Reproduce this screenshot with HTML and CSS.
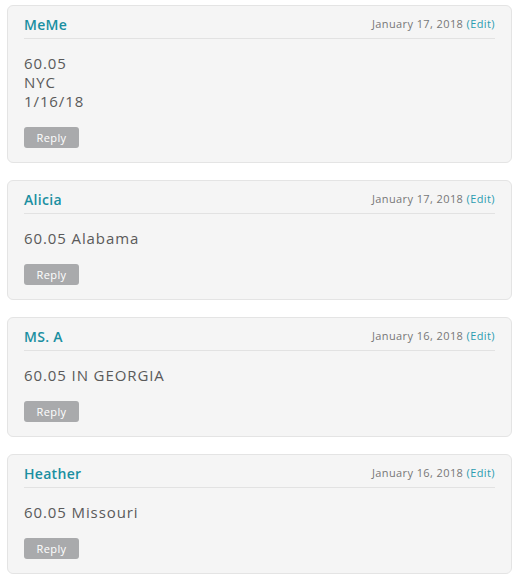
FILE: index.html
```html
<!DOCTYPE html>
<html lang="en">
<head>
    <meta charset="UTF-8">
    <title>Comments</title>
    <link rel="stylesheet" href="styles.css">
</head>
<body>

<div class="comments">
    <div class="comment">
        <div class="comment-head">
            <span class="author">MeMe</span>
            <span class="meta">January 17, 2018 <a href="#">(Edit)</a></span>
        </div>
        <div class="comment-body">60.05<br>NYC<br>1/16/18</div>
        <button class="reply">Reply</button>
    </div>

    <div class="comment">
        <div class="comment-head">
            <span class="author">Alicia</span>
            <span class="meta">January 17, 2018 <a href="#">(Edit)</a></span>
        </div>
        <div class="comment-body">60.05 Alabama</div>
        <button class="reply">Reply</button>
    </div>

    <div class="comment">
        <div class="comment-head">
            <span class="author">MS. A</span>
            <span class="meta">January 16, 2018 <a href="#">(Edit)</a></span>
        </div>
        <div class="comment-body">60.05 IN GEORGIA</div>
        <button class="reply">Reply</button>
    </div>

    <div class="comment">
        <div class="comment-head">
            <span class="author">Heather</span>
            <span class="meta">January 16, 2018 <a href="#">(Edit)</a></span>
        </div>
        <div class="comment-body">60.05 Missouri</div>
        <button class="reply">Reply</button>
    </div>
</div>

</body>
</html>
```

FILE: styles.css
```css
* { box-sizing: border-box; }
body {
    margin: 0;
    background: #fff;
    font-family: "Open Sans", Lato, sans-serif;
}
.comments {
    display: flex;
    flex-direction: column;
    gap: 17px;
    padding: 5px 9px 0 7px;
}
.comment {
    background: #f5f5f5;
    border: 1px solid #e4e4e4;
    border-radius: 6px;
    padding: 0 16px 14px 16px;
}
.comment-head {
    display: flex;
    justify-content: space-between;
    align-items: center;
    padding: 9px 0 5px;
    border-bottom: 1px solid #e2e2e2;
}
.author {
    font-size: 14px;
    line-height: 18px;
    font-weight: 600;
    color: #1a8fa1;
    letter-spacing: 0.3px;
    position: relative;
    top: 1px;
}
.meta {
    font-size: 11px;
    color: #777;
    letter-spacing: 0.4px;
    position: relative;
    top: -1px;
}
.meta a {
    color: #2a9cb0;
    text-decoration: none;
}
.comment-body {
    margin-top: 15px;
    font-size: 15px;
    line-height: 19px;
    color: #5a5a5a;
    letter-spacing: 0.9px;
}
.reply {
    display: block;
    margin-top: 16px;
    width: 55px;
    height: 21px;
    padding: 0;
    border: none;
    border-radius: 3px;
    background: #a9aaac;
    color: #fff;
    font-family: inherit;
    font-size: 11px;
    letter-spacing: 0.4px;
}
```
